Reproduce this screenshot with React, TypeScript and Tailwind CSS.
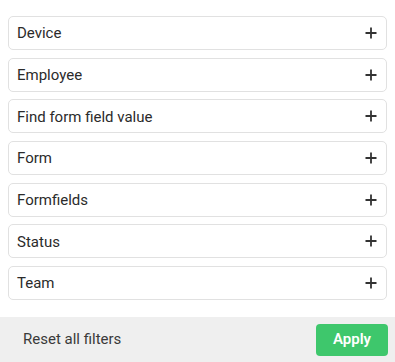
import React from 'react';

const FILTERS = ['Device', 'Employee', 'Find form field value', 'Form', 'Formfields', 'Status', 'Team'];

const Plus: React.FC = () => (
  <svg width="12" height="12" viewBox="0 0 12 12" className="text-[#333]">
    <path d="M6 0.5v11M0.5 6h11" stroke="currentColor" strokeWidth="1.8" />
  </svg>
);

export default function App() {
  return (
    <div className="w-[395px] h-[362px] bg-white flex flex-col font-['Roboto',sans-serif]">
      {/* Filter list */}
      <div className="flex-1 flex flex-col gap-[7.67px] pt-4 px-2">
        {FILTERS.map((f) => (
          <div
            key={f}
            className="h-[34px] flex items-center justify-between border border-[#e1e1e1] rounded-[5px] pl-2 pr-[9px] text-[15px] text-[#2b2b2b]"
          >
            <span className="pt-px">{f}</span>
            <Plus />
          </div>
        ))}
      </div>

      {/* Footer */}
      <div className="h-[45px] bg-[#efefef] flex items-center justify-between pl-[23px] pr-[7px]">
        <span className="text-[15px] text-[#3a3a3a]">Reset all filters</span>
        <button className="w-[72px] h-[32px] rounded-[4px] bg-[#3ec76c] text-white text-[15px] font-semibold">
          Apply
        </button>
      </div>
    </div>
  );
}
